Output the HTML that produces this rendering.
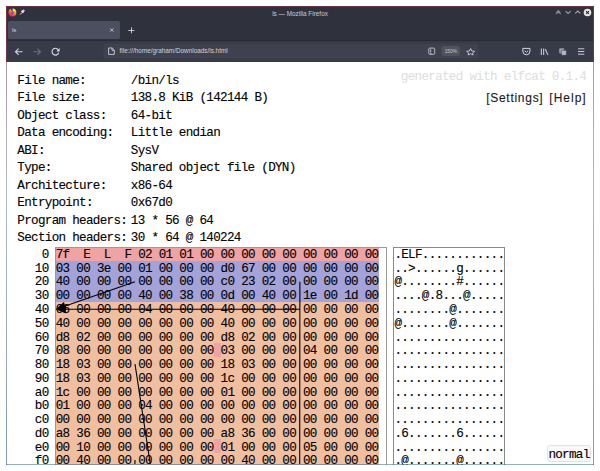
<!DOCTYPE html>
<html><head><meta charset="utf-8"><style>
html,body{margin:0;padding:0;background:#fff;width:600px;height:471px;overflow:hidden;position:relative}
.a{position:absolute}
.mono{font-family:"Liberation Mono",monospace;font-size:12.6px;letter-spacing:-0.691px;white-space:pre;color:#000;-webkit-text-stroke-width:0.12px}
.sans{font-family:"Liberation Sans",sans-serif}
#win{position:absolute;left:6px;top:6px;width:588px;height:459px;background:#fff;border-top:0}
#tb{position:absolute;left:6px;top:6px;width:588px;height:1px;background:#693646}
.vb{position:absolute;top:6px;width:1px;height:459px;background:linear-gradient(#693646 0px,#6a3a4a 56px,#ad97a6 56px,#b09aa8 64px,#b0b8c8 182px,#98a8bc 342px,#7f9cba 458px)}
#inner{position:absolute;left:1px;top:1px;width:586px;height:457px;background:#fff;overflow:hidden}
#title{position:absolute;left:0;top:0;width:586px;height:14px;background:#2f323d}
#tabs{position:absolute;left:0;top:14px;width:586px;height:19px;background:#2f323d}
#tool{position:absolute;left:0;top:33px;width:586px;height:22px;background:#373a47;border-top:1px solid #292b34;box-sizing:border-box}
.hb{position:absolute;left:56.0px}
.hr{position:absolute;left:55.75px;line-height:13.71px}
.ar{position:absolute;left:394.4px;height:13.71px;line-height:13.71px}
.or{position:absolute;right:551.50px;line-height:13.71px;text-align:right}
.mk{position:absolute;background:#f0a3a3}
.il{position:absolute;left:17.3px;line-height:17px}
.iv{position:absolute;left:130.8px;line-height:17px}
</style></head><body>
<div id="win"><div id="inner">
 <div id="title"></div>
 <div id="tabs"></div>
 <div id="tool"></div>
</div></div>

<svg class="a" style="left:0;top:0" width="600" height="62" viewBox="0 0 600 62">
 <defs>
  <linearGradient id="ffg" x1="0.85" y1="0.1" x2="0.35" y2="0.95">
   <stop offset="0" stop-color="#ffe42e"/><stop offset="0.4" stop-color="#ff9a22"/><stop offset="0.8" stop-color="#ff3b55"/><stop offset="1" stop-color="#e8207f"/>
  </linearGradient>
  <linearGradient id="ffp" x1="0.6" y1="0" x2="0.4" y2="1"><stop offset="0" stop-color="#b43ddc"/><stop offset="1" stop-color="#5a46d8"/></linearGradient>
 </defs>
 <!-- firefox logo -->
 <circle cx="12.4" cy="12.5" r="3.9" fill="url(#ffg)"/>
 <path d="M12.4 12.4 L10.4 8.2 L12.9 8.0 Z" fill="#2f323d"/>
 <path d="M12.6 8.4 Q14.2 8.6 14.6 10.4 L12.9 10.8 Z" fill="#ffe42e"/>
 <circle cx="12.4" cy="12.9" r="1.35" fill="url(#ffp)"/>
 <!-- pin -->
 <path d="M20.0 14.6 L21.9 12.6 M21.2 11.4 L23.6 9.9 L24.3 10.6 L22.9 13.0 Z" stroke="#dcdce0" stroke-width="1.0" fill="#dcdce0" stroke-linejoin="round"/>
 <!-- title -->
 <text x="300" y="15.5" text-anchor="middle" font-family="Liberation Sans" font-size="6.4" fill="#c9cbd3">ls — Mozilla Firefox</text>
 <!-- window controls -->
 <path d="M555.9 14.1 Q556.3 11.6 558.3 9.9 Q560.3 11.6 560.7 14.1 L558.3 12.7 Z" fill="#8c8f98" stroke="#8c8f98" stroke-width="0.5" stroke-linejoin="round"/>
 <path d="M565.6 11.2 L568.1 13.6 L570.6 11.2" stroke="#a5a8b0" stroke-width="1.1" fill="none"/>
 <path d="M575.3 13.4 L577.8 11.0 L580.3 13.4" stroke="#a5a8b0" stroke-width="1.1" fill="none"/>
 <circle cx="587.5" cy="12.5" r="3.8" fill="#e6e6ea"/>
 <path d="M586.1 11.1 L588.9 13.9 M588.9 11.1 L586.1 13.9" stroke="#2c2f39" stroke-width="1.15"/>
 <!-- tab -->
 <rect x="8" y="21" width="112" height="18" rx="2" fill="#4b4f5f"/>
 <text x="11.9" y="32.2" font-family="Liberation Sans" font-size="6.0" fill="#d4d5db">ls</text>
 <path d="M110.2 28.4 L113.4 31.6 M113.4 28.4 L110.2 31.6" stroke="#c9cad1" stroke-width="0.9"/>
 <path d="M128.3 30.5 L134.3 30.5 M131.5 27.3 L131.5 33.3" stroke="#d5d6dc" stroke-width="0.9"/>
 <!-- toolbar icons -->
 <path d="M15.5 51.7 L22.5 51.7 M18.6 48.6 L15.5 51.7 L18.6 54.8" stroke="#d6d7dd" stroke-width="1.1" fill="none"/>
 <path d="M33.5 51.7 L40.5 51.7 M37.4 48.6 L40.5 51.7 L37.4 54.8" stroke="#6f727d" stroke-width="1.1" fill="none"/>
 <path d="M58.6 50.5 A3.4 3.4 0 1 0 58.7 52.6" stroke="#d6d7dd" stroke-width="1.1" fill="none"/>
 <path d="M59.6 48.1 L59.6 51.4 L56.4 51.4 Z" fill="#d6d7dd"/>
 <!-- url field -->
 <rect x="103.5" y="43.5" width="375" height="15" rx="2" fill="#3f424e"/>
 <path d="M108.6 48.0 L112.2 48.0 L114.3 50.1 L114.3 54.4 L108.6 54.4 Z M112.0 48.2 L112.0 50.3 L114.1 50.3" stroke="#cfd0d6" stroke-width="0.9" fill="none" stroke-linejoin="round"/>
 <text x="119.6" y="53.3" font-family="Liberation Sans" font-size="6.38" fill="#d2d3d9">file:///home/graham/Downloads/ls.html</text>
 <rect x="428.8" y="48.1" width="5.9" height="6.2" rx="0.9" stroke="#c3c4cb" stroke-width="0.9" fill="none"/>
 <path d="M430.7 49.2 L430.7 52.4" stroke="#c3c4cb" stroke-width="0.9"/>
 <rect x="430.2" y="52.9" width="1.2" height="1.0" fill="#c3c4cb"/>
 <rect x="441.8" y="46" width="18.2" height="10" rx="2" fill="#50535f"/>
 <text x="450.9" y="52.8" text-anchor="middle" font-family="Liberation Sans" font-size="4.9" fill="#c7c8cf">150%</text>
 <path d="M470.6 48.5 L471.8 51.0 L474.6 51.3 L472.5 53.1 L473.1 55.0 L470.6 53.7 L468.1 55.0 L468.7 53.1 L466.6 51.3 L469.4 51.0 Z" stroke="#d6d7dd" stroke-width="0.85" fill="none" stroke-linejoin="round"/>
 <path d="M522.8 48.4 L530.0 48.4 L530.0 51.0 Q530.0 54.8 526.4 54.8 Q522.8 54.8 522.8 51.0 Z" stroke="#d6d7dd" stroke-width="1" fill="none" stroke-linejoin="round"/>
 <path d="M524.6 50.6 L526.4 52.3 L528.2 50.6" stroke="#d6d7dd" stroke-width="1" fill="none"/>
 <path d="M541.4 48.4 L541.4 55 M543.6 48.4 L543.6 55 M545.3 49.0 L547.9 55" stroke="#b9bac1" stroke-width="1.2" fill="none"/>
 <rect x="559.2" y="48.2" width="5" height="5.2" rx="1" fill="#9a9ca4"/>
 <rect x="561.4" y="50.3" width="5" height="5" rx="1" fill="#b5b7be" stroke="#393c49" stroke-width="0.6"/>
 <path d="M578 48.8 L584.3 48.8 M578 51.5 L584.3 51.5 M578 54.2 L584.3 54.2" stroke="#c8c9cf" stroke-width="1"/>
</svg>

<div class="a mono" id="page" style="left:0;top:0;width:600px;height:465px;overflow:hidden">
<div class="il" style="top:72.50px">File name:</div><div class="iv" style="top:72.50px">/bin/ls</div><div class="il" style="top:90.02px">File size:</div><div class="iv" style="top:90.02px">138.8 KiB (142144 B)</div><div class="il" style="top:107.54px">Object class:</div><div class="iv" style="top:107.54px">64-bit</div><div class="il" style="top:125.06px">Data encoding:</div><div class="iv" style="top:125.06px">Little endian</div><div class="il" style="top:142.58px">ABI:</div><div class="iv" style="top:142.58px">SysV</div><div class="il" style="top:160.10px">Type:</div><div class="iv" style="top:160.10px">Shared object file (DYN)</div><div class="il" style="top:177.62px">Architecture:</div><div class="iv" style="top:177.62px">x86-64</div><div class="il" style="top:195.14px">Entrypoint:</div><div class="iv" style="top:195.14px">0x67d0</div><div class="il" style="top:212.66px">Program headers:</div><div class="iv" style="top:212.66px">13 * 56 @ 64</div><div class="il" style="top:230.18px">Section headers:</div><div class="iv" style="top:230.18px">30 * 64 @ 140224</div>
<div class="a" style="left:55px;top:246.8px;width:330px;height:230px;border:1px solid #9a9a9a"></div>
<div class="a" style="left:393px;top:246.8px;width:110px;height:230px;border:1px solid #8a8a8a"></div>
<div class="hb" style="top:247.50px;background:#f0a3a3;width:322.99px;height:14.0px"></div><div class="hr" style="top:248.90px">7f  E  L  F 02 01 01 00 00 00 00 00 00 00 00 00</div><div class="hb" style="top:261.21px;background:#a3a3d9;width:322.99px;height:14.0px"></div><div class="hr" style="top:262.67px">03 00 3e 00 01 00 00 00 d0 67 00 00 00 00 00 00</div><div class="hb" style="top:274.92px;background:#a3a3d9;width:322.99px;height:14.0px"></div><div class="hr" style="top:276.44px">40 00 00 00 00 00 00 00 c0 23 02 00 00 00 00 00</div><div class="hb" style="top:288.63px;background:#a3a3d9;width:322.99px;height:14.0px"></div><div class="hr" style="top:290.21px">00 00 00 00 40 00 38 00 0d 00 40 00 1e 00 1d 00</div><div class="hb" style="top:302.34px;background:#f0bfa0;width:322.99px;height:14.0px"></div><div class="hr" style="top:303.98px">06 00 00 00 04 00 00 00 40 00 00 00 00 00 00 00</div><div class="hb" style="top:316.05px;background:#f0bfa0;width:322.99px;height:14.0px"></div><div class="hr" style="top:317.75px">40 00 00 00 00 00 00 00 40 00 00 00 00 00 00 00</div><div class="hb" style="top:329.76px;background:#f0bfa0;width:322.99px;height:14.0px"></div><div class="hr" style="top:331.52px">d8 02 00 00 00 00 00 00 d8 02 00 00 00 00 00 00</div><div class="hb" style="top:343.47px;background:#f0bfa0;width:322.99px;height:14.0px"></div><div class="hr" style="top:345.29px">08 00 00 00 00 00 00 00 03 00 00 00 04 00 00 00</div><div class="hb" style="top:357.18px;background:#f0bfa0;width:322.99px;height:14.0px"></div><div class="hr" style="top:359.06px">18 03 00 00 00 00 00 00 18 03 00 00 00 00 00 00</div><div class="hb" style="top:370.89px;background:#f0bfa0;width:322.99px;height:14.0px"></div><div class="hr" style="top:372.83px">18 03 00 00 00 00 00 00 1c 00 00 00 00 00 00 00</div><div class="hb" style="top:384.60px;background:#f0bfa0;width:322.99px;height:14.0px"></div><div class="hr" style="top:386.60px">1c 00 00 00 00 00 00 00 01 00 00 00 00 00 00 00</div><div class="hb" style="top:398.31px;background:#f0bfa0;width:322.99px;height:14.0px"></div><div class="hr" style="top:400.37px">01 00 00 00 04 00 00 00 00 00 00 00 00 00 00 00</div><div class="hb" style="top:412.02px;background:#f0bfa0;width:322.99px;height:14.0px"></div><div class="hr" style="top:414.14px">00 00 00 00 00 00 00 00 00 00 00 00 00 00 00 00</div><div class="hb" style="top:425.73px;background:#f0bfa0;width:322.99px;height:14.0px"></div><div class="hr" style="top:427.91px">a8 36 00 00 00 00 00 00 a8 36 00 00 00 00 00 00</div><div class="hb" style="top:439.44px;background:#f0bfa0;width:322.99px;height:14.0px"></div><div class="hr" style="top:441.68px">00 10 00 00 00 00 00 00 01 00 00 00 05 00 00 00</div><div class="hb" style="top:453.15px;background:#f0bfa0;width:322.99px;height:14.0px"></div><div class="hr" style="top:455.45px">00 40 00 00 00 00 00 00 00 40 00 00 00 00 00 00</div>
<div class="mk" style="left:214.01px;top:343.47px;width:6.87px;height:13.3px"></div><div class="mk" style="left:214.01px;top:439.44px;width:6.87px;height:13.3px"></div>
<div class="ar" style="top:248.90px">.ELF............</div><div class="ar" style="top:262.67px">..&gt;......g......</div><div class="ar" style="top:276.44px">@........#......</div><div class="ar" style="top:290.21px">....@.8...@.....</div><div class="ar" style="top:303.98px">........@.......</div><div class="ar" style="top:317.75px">@.......@.......</div><div class="ar" style="top:331.52px">................</div><div class="ar" style="top:345.29px">................</div><div class="ar" style="top:359.06px">................</div><div class="ar" style="top:372.83px">................</div><div class="ar" style="top:386.60px">................</div><div class="ar" style="top:400.37px">................</div><div class="ar" style="top:414.14px">................</div><div class="ar" style="top:427.91px">.6.......6......</div><div class="ar" style="top:441.68px">................</div><div class="ar" style="top:455.45px">.@.......@......</div>
<div class="or" style="top:248.90px">0</div><div class="or" style="top:262.67px">10</div><div class="or" style="top:276.44px">20</div><div class="or" style="top:290.21px">30</div><div class="or" style="top:303.98px">40</div><div class="or" style="top:317.75px">50</div><div class="or" style="top:331.52px">60</div><div class="or" style="top:345.29px">70</div><div class="or" style="top:359.06px">80</div><div class="or" style="top:372.83px">90</div><div class="or" style="top:386.60px">a0</div><div class="or" style="top:400.37px">b0</div><div class="or" style="top:414.14px">c0</div><div class="or" style="top:427.91px">d0</div><div class="or" style="top:441.68px">e0</div><div class="or" style="top:455.45px">f0</div>
<svg class="a" style="left:0;top:0" width="600" height="464" viewBox="0 0 600 464"><line x1="135.00" y1="281.78" x2="65.25" y2="305.92" stroke="#000" stroke-width="1.1"/><polygon points="55.80,309.20 63.88,301.95 66.62,309.89" fill="#000"/><line x1="299.88" y1="309.20" x2="65.80" y2="309.20" stroke="#000" stroke-width="1.1"/><polygon points="55.80,309.20 65.80,305.00 65.80,313.40" fill="#000"/><line x1="299.88" y1="281.78" x2="299.58" y2="600.00" stroke="#000" stroke-width="1.1"/><line x1="135.00" y1="364.04" x2="220.88" y2="926.15" stroke="#000" stroke-width="1.1"/><line x1="135.00" y1="460.00" x2="56.00" y2="3764.12" stroke="#000" stroke-width="1.1"/></svg>
<div class="a" style="left:400.8px;top:70.1px;color:#dfdfdf">generated with elfcat 0.1.4</div>
<div class="a sans" style="left:486.2px;top:90.8px;font-size:12px;letter-spacing:0.72px;color:#1a1a1a;white-space:pre;line-height:14px">[Settings]</div><div class="a sans" style="left:549.3px;top:90.8px;font-size:12px;letter-spacing:1.0px;color:#1a1a1a;white-space:pre;line-height:14px">[Help]</div>
<div class="a" style="left:546.5px;top:444.5px;width:44.5px;height:17.5px;border:1px solid #e3e3e3;border-radius:3px;background:#f9f9f9;box-sizing:border-box;line-height:18px;padding-left:0.9px">normal</div>
</div>
<div id="tb"></div><div class="vb" style="left:6px"></div><div class="vb" style="left:593px"></div>
<div class="a" style="left:6px;top:464px;width:588px;height:1px;background:rgba(60,105,160,0.55)"></div>
</body></html>
